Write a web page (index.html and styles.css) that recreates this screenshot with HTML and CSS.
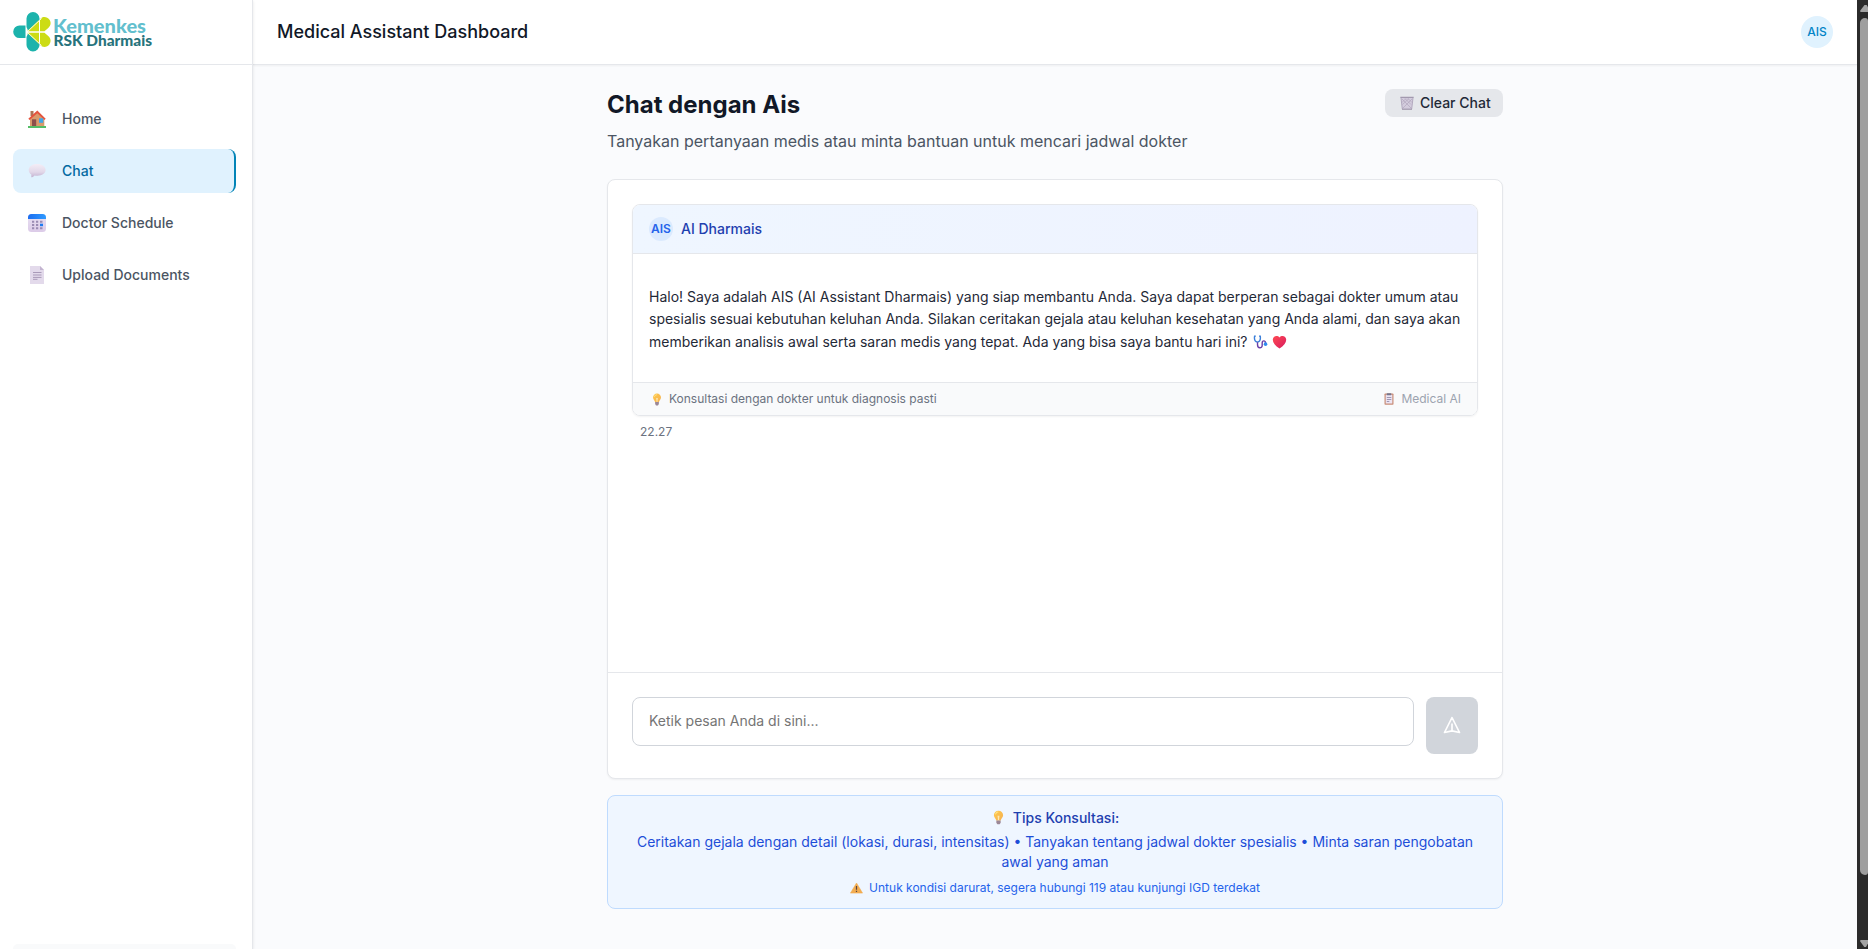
FILE: index.html
```html
<!DOCTYPE html>
<html lang="id">
<head>
<meta charset="utf-8">
<title>Medical Assistant Dashboard</title>
<link rel="stylesheet" href="styles.css">
</head>
<body>
<svg class="defs" width="0" height="0">
  <defs>
    <linearGradient id="bulbFill" x1="0" y1="0" x2="1" y2="1"><stop offset="0" stop-color="#ffc94a"/><stop offset="1" stop-color="#f5b053"/></linearGradient>
    <linearGradient id="heartFill" x1="0" y1="0" x2="1" y2="1"><stop offset="0" stop-color="#ff4a52"/><stop offset="1" stop-color="#d81b60"/></linearGradient>
    <linearGradient id="bubbleFill" x1="0" y1="0" x2="0" y2="1"><stop offset="0" stop-color="#f3edf6"/><stop offset=".6" stop-color="#e2d8e9"/><stop offset="1" stop-color="#c3b2d0"/></linearGradient>
    <linearGradient id="calFill" x1="0" y1="0" x2="0" y2="1"><stop offset="0" stop-color="#e9e2f3"/><stop offset="1" stop-color="#dccbe8"/></linearGradient>
    <linearGradient id="calTop" x1="0" y1="0" x2="1" y2="0"><stop offset="0" stop-color="#1c6df0"/><stop offset="1" stop-color="#2f9bff"/></linearGradient>
    <symbol id="bulb" viewBox="0 0 16 16"><path d="M8 .7a4.800 4.800 0 0 1 4.900 4.800c0 2.600-2.300 3.400-2.500 5.800H5.600C5.400 8.900 3.100 8.100 3.100 5.500A4.800 4.800 0 0 1 8 .7z" fill="url(#bulbFill)"/><path d="M5 4.200c.4-1.200 1.200-1.900 2.300-2" stroke="#ffe48a" stroke-width="1.200" fill="none" stroke-linecap="round"/><path d="M7 6l.5 5h1L9 6" fill="#fde9b0"/><path d="M5.700 11.200h4.600v2.300L9.200 15.300H6.800L5.700 13.500z" fill="#9b8796"/></symbol>
  </defs>
</svg>
<div class="app">
  <aside class="sidebar">
    <div class="brand">
      <svg width="160" height="48" viewBox="0 0 160 48">
        <g fill="#1cb3ac">
          <path d="M13.500 17V8.500a6.500 6.500 0 0 1 13 0V10.500L15 20.500z"/>
          <path d="M13.500 27V35a6.500 6.500 0 0 0 13 0V33L15 23.500z"/>
          <path d="M12.500 15.500H6.500a6.300 6.300 0 0 0 0 12.600h6z"/>
        </g>
        <g fill="#ccdc14">
          <path d="M14 21.300 26 10V21.300z"/><path d="M14 22.700 26 34V22.700z"/>
          <path d="M27 9.200C30 5.500 34.500 7 36.300 9.500c2.200 3 1.400 6-.8 8.200L31.500 21.300H27z"/>
          <path d="M27 34.800c3 3.700 7.500 2.200 9.300-.3 2.200-3 1.400-6-.8-8.200L31.500 22.700H27z"/>
        </g>
        <path d="M14 22 28.500 8.500M14 22l14.500 13.500" stroke="#fff" stroke-width=".9"/>
        <text class="brand-top" x="40" y="22.500" textLength="93" lengthAdjust="spacingAndGlyphs">Kemenkes</text>
        <text class="brand-sub" x="40.500" y="36" textLength="98.500" lengthAdjust="spacingAndGlyphs">RSK Dharmais</text>
      </svg>
    </div>
    <nav class="nav">
      <a class="nav-item">
        <svg class="nav-icon" viewBox="0 0 18 18"><path d="M2.500 1h3v5h-3z" fill="#ad7457"/><path d="M2 8.500 9.300 2l7 6.500V16.500H2z" fill="#d99b6c"/><path d="M.3 8.700 9.300.4 17.700 8.700 16.500 10 9.300 3.300 1.600 10z" fill="#e5533d"/><path d="M4 9.300h4.200v7.200H4z" fill="#8d4f4b"/><path d="M11 8.300h4.200v4.500H11z" fill="#3fa7e8"/><path d="M0 16h18v2H0z" fill="#54bd66"/></svg>
        <span>Home</span></a>
      <a class="nav-item active">
        <svg class="nav-icon" viewBox="0 0 18 18"><path d="M9 2c5 0 8.600 2.600 8.600 6S14 13.700 9.500 13.700c-1.200 0-2.100-.1-3-.3C5.600 14.600 4.600 15.100 3.300 15.300V12.500C1.700 11.500.7 9.900.7 8 .7 4.600 4.200 2 9 2z" fill="url(#bubbleFill)"/></svg>
        <span>Chat</span></a>
      <a class="nav-item">
        <svg class="nav-icon" viewBox="0 0 18 18"><rect width="18" height="18" rx="3.500" fill="url(#calFill)"/><path d="M0 5V3.500A3.500 3.500 0 0 1 3.500 0h11A3.500 3.500 0 0 1 18 3.500V5z" fill="url(#calTop)"/><g fill="#9a8bb3"><path d="M4 6.700h2.200v2H4zM8 6.700h2.200v2H8zM12 6.700h2.500v2H12zM4 10h2.200v2H4zM8 10h2.200v2H8zM4 13.200h2.200v2H4zM8 13.200h2.200v2H8zM12 13.200h2.500v2H12z"/></g><path d="M12 9.700h3v2.500h-3z" fill="#1f7bf0"/></svg>
        <span>Doctor Schedule</span></a>
      <a class="nav-item">
        <svg class="nav-icon" viewBox="0 0 18 18"><path d="M2 0h10l4 4v14H2z" fill="#e3daeb"/><path d="M12 0v4h4z" fill="#c3b4d0"/><path d="M5 6.500h8.500M5 9h8.500M5 11.400h8.500M5 13.300h4.500" stroke="#a99ab8"/></svg>
        <span>Upload Documents</span></a>
    </nav>
    <div class="sidebar-foot"></div>
  </aside>
  <div class="page">
    <header class="topbar">
      <div class="topbar-title">Medical Assistant Dashboard</div>
      <div class="user">AIS</div>
    </header>
    <main class="content">
      <div class="heading">
        <div>
          <h1>Chat dengan Ais</h1>
          <p>Tanyakan pertanyaan medis atau minta bantuan untuk mencari jadwal dokter</p>
        </div>
        <button class="clear"><svg width="14" height="14" viewBox="0 0 14 14"><path d="M.8 1.500h12.400L11.800 13H2.200z" fill="#d3ccdd"/><path d="M2 3l9 9M5 2.500l6 6M8 2.500l4 4M12 3l-9 9M9 2.500l-6.500 6M6 2.500 2 6.500" stroke="#aca1b9" stroke-width=".6"/><path d="M1 2l1.300 11M13 2l-1.300 11" stroke="#a99eb6" stroke-width=".8"/><path d="M.3 1.300h13.400M2 13.200h10" stroke="#9489a0" stroke-width="1"/></svg><span>Clear Chat</span></button>
      </div>
      <section class="chat">
        <div class="messages">
          <article class="message">
            <div class="message-head"><span class="bot">AIS</span><span>AI Dharmais</span></div>
            <div class="message-body">Halo! Saya adalah AIS (AI Assistant Dharmais) yang siap membantu Anda. Saya dapat berperan sebagai dokter umum atau<br>spesialis sesuai kebutuhan keluhan Anda. Silakan ceritakan gejala atau keluhan kesehatan yang Anda alami, dan saya akan<br>memberikan analisis awal serta saran medis yang tepat. Ada yang bisa saya bantu hari ini? <svg class="emoji steth" viewBox="0 0 15 15"><path d="M2.500 1.200H1.200c-.6 3.500.4 6 3 6.500 2.600-.5 3.600-3 3-6.500H5.900" fill="none" stroke="#3b7fd9" stroke-width="1.500"/><path d="M4.300 7.700v2.500c0 4.800 5 4.300 5 1V8.500c0-3 3.400-3 3.600 0" fill="none" stroke="#6a3fa8" stroke-width="1.500"/><circle cx="12.900" cy="9.800" r="1.900" fill="#2f8af0"/></svg><svg class="emoji heart" viewBox="0 0 15 15"><path d="M7.500 14.500C3 11.200.3 8.500.3 5 .3 1 5.200-.4 7.500 2.600c2.300-3 7.200-1.600 7.200 2.400 0 3.500-2.700 6.200-7.200 9.500z" fill="url(#heartFill)"/></svg></div>
            <div class="message-foot"><span class="hint"><svg width="14" height="13"><use href="#bulb"/></svg>Konsultasi dengan dokter untuk diagnosis pasti</span><span class="source"><svg width="12" height="12" viewBox="0 0 12 12"><rect x="1.500" y=".5" width="9" height="11.300" rx=".8" fill="#c98d78"/><path d="M2.700 1.800h6.600v8.800H2.700z" fill="#ece4f2"/><path d="M3.800.3h4.400v2H3.800z" fill="#74758d"/><path d="M3.800 4.500h4.500M3.800 6.500h4.500M3.800 8.500h2.500" stroke="#8c83a3" stroke-width=".8"/></svg>Medical AI</span></div>
          </article>
          <div class="time">22.27</div>
        </div>
        <div class="composer">
          <div class="field">Ketik pesan Anda di sini...</div>
          <button class="send"><svg width="20" height="20" viewBox="0 0 24 24" fill="none" stroke="#fff" stroke-width="2" stroke-linecap="round" stroke-linejoin="round"><path d="M12 19l9 2-9-18-9 18 9-2zm0 0v-8"/></svg></button>
        </div>
      </section>
      <section class="tips">
        <div class="tips-title"><svg width="15" height="15"><use href="#bulb"/></svg>Tips Konsultasi:</div>
        <div class="tips-text">Ceritakan gejala dengan detail (lokasi, durasi, intensitas) • Tanyakan tentang jadwal dokter spesialis • Minta saran pengobatan<br>awal yang aman</div>
        <div class="tips-alert"><svg width="13" height="12" viewBox="0 0 14 12"><path d="M7 .6 13.500 11.500H.5z" fill="#f2ac50" stroke="#f2ac50" stroke-width=".6" stroke-linejoin="round"/><path d="M7 3.800v4M7 9v1.300" stroke="#5b4340" stroke-width="1.300"/></svg>Untuk kondisi darurat, segera hubungi 119 atau kunjungi IGD terdekat</div>
      </section>
    </main>
  </div>
  <div class="scrollbar">
    <svg width="11" height="18" viewBox="0 0 11 18"><path d="M7.500 5h2.200L13 11v1H3.300v-1.500z" fill="#a3a3a3"/></svg>
    <div class="thumb"></div>
    <svg width="11" height="14" viewBox="0 0 11 14"><path d="M3.300 5H13L9 12H7.300L3.300 6.500z" fill="#a3a3a3"/></svg>
  </div>
</div>
</body>
</html>
```

FILE: styles.css
```css
* { box-sizing: border-box; }
body { margin: 0; font-family: Inter, "Liberation Sans", sans-serif; font-size: 14px; line-height: 20px; color: #111827; }
h1, p { margin: 0; }
button { font: inherit; border: 0; padding: 0; }
svg { flex: none; }
.defs { position: absolute; }
.app { display: flex; height: 949px; width: 1868px; overflow: hidden; background: #fafbfd; }

.sidebar { width: 253px; flex: none; display: flex; flex-direction: column; background: #fff; border-right: 1px solid #e5e7eb; box-shadow: 0 1px 3px rgba(0,0,0,.1); position: relative; }
.brand { height: 65px; flex: none; padding: 10px 0 0 13px; border-bottom: 1px solid #e5e7eb; }
.brand svg { display: block; overflow: visible; }
.brand-top { font-family: Lato, sans-serif; font-weight: 900; font-size: 19px; fill: #62bfce; }
.brand-sub { font-family: Lato, sans-serif; font-weight: 900; font-size: 14.5px; fill: #27737c; }
.nav { display: flex; flex-direction: column; gap: 8px; padding: 32px 16px 0 13px; flex: 1; }
.nav-item { display: flex; align-items: center; gap: 16px; height: 44px; padding-left: 15px; border-radius: 8px; font-weight: 500; color: #4b5563; }
.nav-icon { width: 18px; height: 18px; }
.nav-item.active { background: #e0f2fe; color: #0369a1; border-right: 2px solid #0284b7; }
.sidebar-foot { height: 5px; margin: 0 16px 0 13px; background: #f9fafb; border-radius: 8px 8px 0 0; }

.page { flex: 1; display: flex; flex-direction: column; }
.topbar { height: 65px; display: flex; align-items: center; justify-content: space-between; padding: 0 24px; background: #fff; border-bottom: 1px solid #e5e7eb; box-shadow: 0 1px 2px rgba(0,0,0,.05); }
.topbar-title { font-size: 18px; font-weight: 500; line-height: 28px; }
.user { width: 32px; height: 32px; border-radius: 50%; background: #e0f2fe; color: #0284c7; font-size: 12px; line-height: 32px; font-weight: 500; text-align: center; }

.content { width: 896px; margin: 0 auto; padding-top: 24px; }
.heading { display: flex; justify-content: space-between; align-items: flex-start; height: 90px; }
h1 { font-size: 24px; line-height: 32px; font-weight: 700; }
.heading p { margin-top: 8px; font-size: 16px; line-height: 24px; color: #4b5563; }
.clear { display: flex; align-items: center; gap: 6px; width: 118px; height: 28px; padding-left: 15px; border-radius: 8px; background: #e5e7eb; color: #1f2937; font-weight: 500; }

.chat { height: 600px; display: flex; flex-direction: column; background: #fff; border: 1px solid #e5e7eb; border-radius: 8px; box-shadow: 0 1px 2px rgba(0,0,0,.05); }
.messages { flex: 1; padding: 24px; }
.message { height: 212px; border: 1px solid #e5e7eb; border-radius: 8px; overflow: hidden; display: flex; flex-direction: column; box-shadow: 0 1px 2px rgba(0,0,0,.05); }
.message-head { display: flex; align-items: center; gap: 8px; height: 49px; padding: 0 16px; background: linear-gradient(to right, #eff6ff, #eef2ff); border-bottom: 1px solid #e5e7eb; color: #1e40af; font-weight: 500; }
.bot { width: 24px; height: 24px; border-radius: 50%; background: #dbeafe; color: #2563eb; font-size: 12px; line-height: 24px; font-weight: 600; text-align: center; }
.message-body { flex: 1; padding: 32px 0 0 16px; line-height: 22.4px; color: #1f2937; white-space: nowrap; }
.emoji { width: 15px; height: 14px; vertical-align: -2px; }
.steth { margin-left: 2px; }
.heart { margin-left: 4px; }
.message-foot { display: flex; justify-content: space-between; align-items: center; height: 33px; padding: 0 16px; border-top: 1px solid #e5e7eb; background: #f9fafb; font-size: 12px; color: #6b7280; }
.hint, .source { display: flex; align-items: center; gap: 5px; }
.hint { padding-left: 1px; }
.source { color: #9ca3af; gap: 6px; }
.time { margin: 8px 0 0 8px; font-size: 12px; line-height: 16px; color: #6b7280; }
.composer { display: flex; gap: 12px; height: 106px; padding: 24px; border-top: 1px solid #e5e7eb; }
.field { flex: 1; height: 49px; padding: 0 16px; line-height: 46px; border: 1px solid #d1d5db; border-radius: 8px; color: #757575; }
.send { width: 52px; height: 57px; padding-bottom: 2px; display: flex; align-items: center; justify-content: center; background: #d1d5db; border-radius: 8px; }

.tips { margin-top: 16px; height: 114px; padding: 12px 0 0; border: 1px solid #bfdbfe; border-radius: 8px; background: #eff6ff; text-align: center; color: #1d4ed8; }
.tips svg { vertical-align: -2px; }
.tips-title { color: #1e40af; font-weight: 500; }
.tips-title svg { margin-right: 7px; }
.tips-text { margin-top: 4px; }
.tips-alert { margin-top: 8px; font-size: 12px; line-height: 16px; color: #2563eb; }
.tips-alert svg { margin-right: 6px; }

.scrollbar { width: 11px; flex: none; display: flex; flex-direction: column; background: #2b2b2b; }
.scrollbar svg { display: block; }
.thumb { width: 8px; height: 857px; margin: 0 0 60px 3px; background: #9f9f9f; border-radius: 5px 3px 3px 5px; }
```
